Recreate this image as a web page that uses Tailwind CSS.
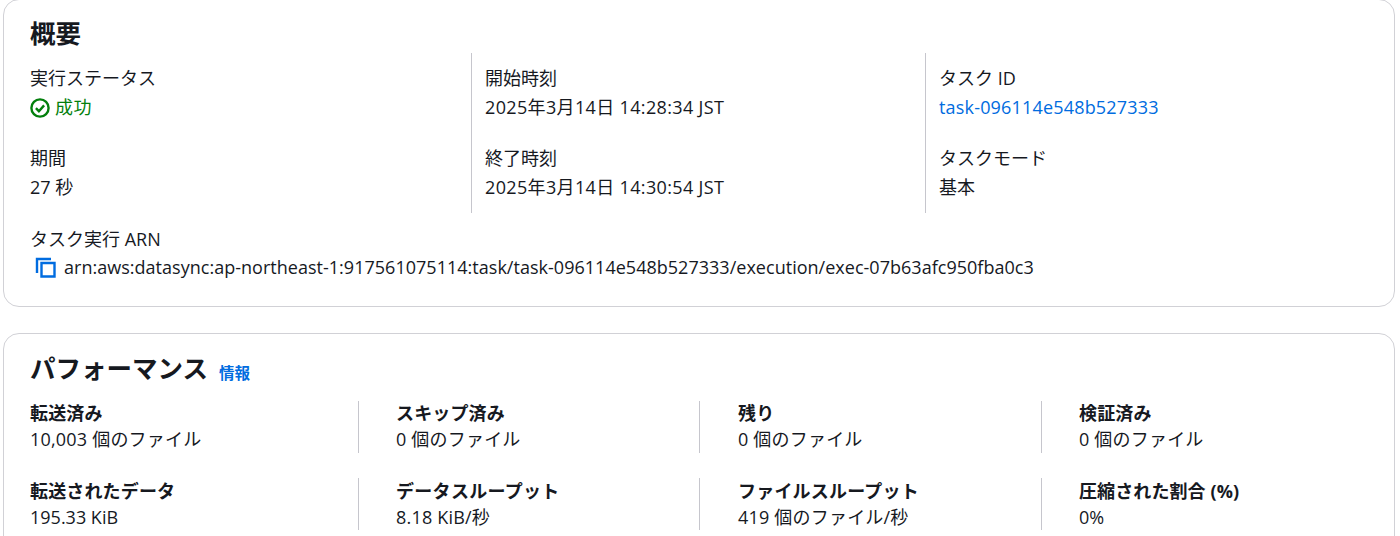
<!doctype html>
<html><head><script src="https://cdn.jsdelivr.net/npm/@tailwindcss/browser@4"></script></head>
<body class="bg-white overflow-hidden h-[536px] font-['Open_Sans','Noto_Sans_CJK_JP',sans-serif]">
<div class="text-[#16191f] text-[18px] px-[3px] pr-[5px]">
<section class="h-[308px] border border-[#d1d1d6] rounded-[16px] -mt-[1px] px-[26px] pt-[18px]">
<h2 class="text-[25.5px] leading-[30px] font-bold">概要</h2>
<div class="grid grid-cols-[441px_454px_1fr] mt-[5px]">
<div class="h-[160px] pt-[11px]"><div class="h-[29px] leading-[29px]">実行ステータス</div><div class="h-[29px] flex items-center gap-[5px] text-[#037f0c]"><svg class="w-[20px] h-[20px]" viewBox="0 0 20 20" fill="none" stroke="#037f0c" stroke-width="2.4"><circle cx="10" cy="10" r="8.6"/><path d="M5.9 10.2l3 3 5.2-5.8"/></svg><span class="tracking-[0.4px]">成功</span></div><div class="mt-[22px] h-[29px] leading-[29px]">期間</div><div class="h-[29px] leading-[29px]">27 秒</div></div>
<div class="border-l border-[#c6c6cd] pl-[13px] h-[160px] pt-[11px]"><div class="h-[29px] leading-[29px]">開始時刻</div><div class="h-[29px] leading-[29px] tracking-[0.35px]">2025年3月14日 14:28:34 JST</div><div class="mt-[22px] h-[29px] leading-[29px]">終了時刻</div><div class="h-[29px] leading-[29px] tracking-[0.35px]">2025年3月14日 14:30:54 JST</div></div>
<div class="border-l border-[#c6c6cd] pl-[13px] h-[160px] pt-[11px]"><div class="h-[29px] leading-[29px]">タスク ID</div><div class="h-[29px] leading-[29px] text-[#006ce0] tracking-[0.18px]">task-096114e548b527333</div><div class="mt-[22px] h-[29px] leading-[29px]">タスクモード</div><div class="h-[29px] leading-[29px]">基本</div></div>
</div>
<div class="mt-[12px] h-[28px] leading-[28px]">タスク実行 ARN</div>
<div class="h-[28px] flex items-center gap-[8px] pl-[5px]"><svg class="w-[21px] h-[21px]" viewBox="0 0 21 21" fill="none" stroke="#006ce0" stroke-width="2.4"><path d="M2 16V2h14"/><path d="M6.5 6h13v13.5h-13z"/></svg><span class="tracking-[0.02px]">arn:aws:datasync:ap-northeast-1:917561075114:task/task-096114e548b527333/execution/exec-07b63afc950fba0c3</span></div>
</section>
<section class="mt-[26px] h-[300px] border border-[#d1d1d6] rounded-[16px] px-[26px] pt-[17px]">
<div class="flex items-baseline gap-[11px]"><h2 class="text-[25.5px] leading-[34px] font-bold">パフォーマンス</h2><span class="text-[15.5px] text-[#006ce0] font-bold translate-y-[1px]">情報</span></div>
<div class="grid grid-cols-[328px_341px_342px_1fr] mt-[16px] gap-y-[25px]">
<div class="h-[52px]"><div class="font-bold leading-[26px] -mt-[1px] tracking-[0.15px]">転送済み</div><div class="leading-[26px] tracking-[0.2px]">10,003 個のファイル</div></div>
<div class="h-[52px] border-l border-[#c6c6cd] pl-[37px]"><div class="font-bold leading-[26px] -mt-[1px] tracking-[0.15px]">スキップ済み</div><div class="leading-[26px] tracking-[0.2px]">0 個のファイル</div></div>
<div class="h-[52px] border-l border-[#c6c6cd] pl-[38px]"><div class="font-bold leading-[26px] -mt-[1px] tracking-[0.15px]">残り</div><div class="leading-[26px] tracking-[0.2px]">0 個のファイル</div></div>
<div class="h-[52px] border-l border-[#c6c6cd] pl-[37px]"><div class="font-bold leading-[26px] -mt-[1px] tracking-[0.15px]">検証済み</div><div class="leading-[26px] tracking-[0.2px]">0 個のファイル</div></div>
<div class="h-[52px]"><div class="font-bold leading-[26px] tracking-[0.15px]">転送されたデータ</div><div class="leading-[26px]">195.33 KiB</div></div>
<div class="h-[52px] border-l border-[#c6c6cd] pl-[37px]"><div class="font-bold leading-[26px] tracking-[0.3px]">データスループット</div><div class="leading-[26px] tracking-[0.2px]">8.18 KiB/秒</div></div>
<div class="h-[52px] border-l border-[#c6c6cd] pl-[38px]"><div class="font-bold leading-[26px] tracking-[0.2px]">ファイルスループット</div><div class="leading-[26px] tracking-[0.2px]">419 個のファイル/秒</div></div>
<div class="h-[52px] border-l border-[#c6c6cd] pl-[37px]"><div class="font-bold leading-[26px] tracking-[0.1px]">圧縮された割合 (%)</div><div class="leading-[26px]">0%</div></div>
</div>
</section>
</div>
</body></html>
